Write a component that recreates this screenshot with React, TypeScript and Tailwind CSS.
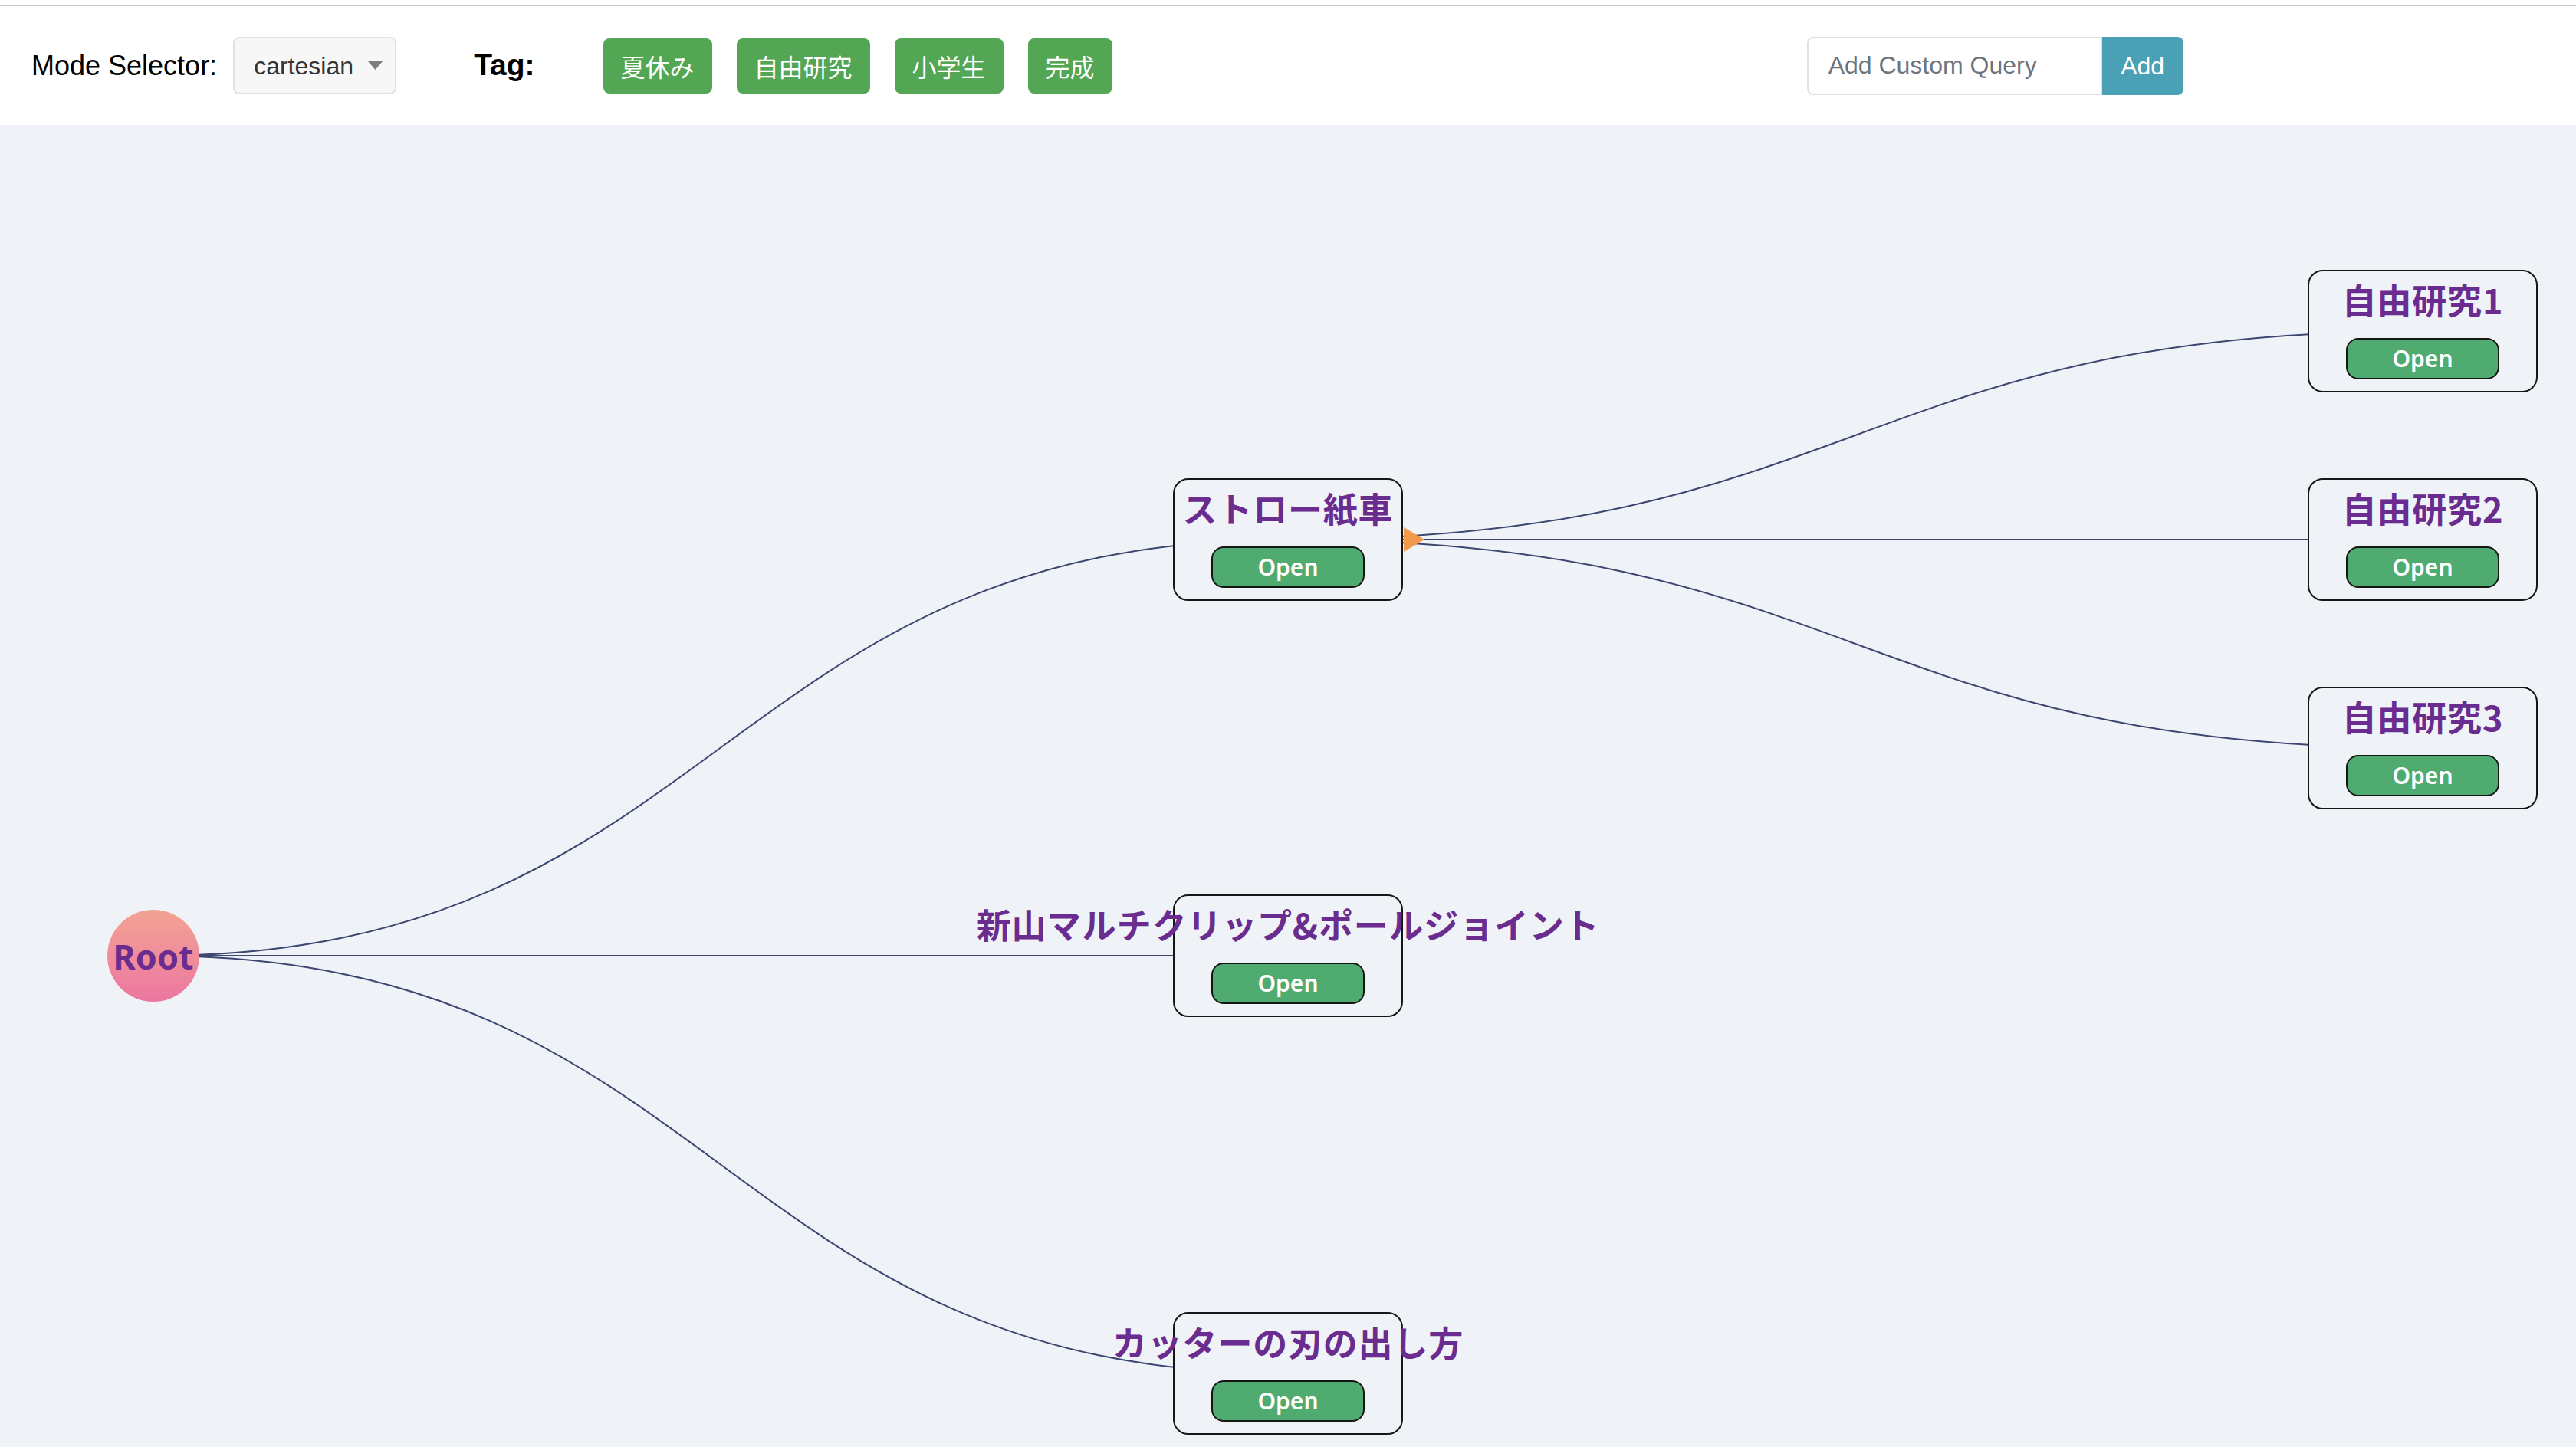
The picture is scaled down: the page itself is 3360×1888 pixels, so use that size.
import React from "react";

type TreeNode = {
    id: string;
    title: string;
    x: number;
    y: number;
    toggle?: boolean;
};

const ROOT = { x: 200, y: 1084 };

const nodes: TreeNode[] = [
    { id: "straw", title: "ストロー紙車", x: 1680, y: 541, toggle: true },
    { id: "clip", title: "新山マルチクリップ&ポールジョイント", x: 1680, y: 1084 },
    { id: "cutter", title: "カッターの刃の出し方", x: 1680, y: 1629 },
    { id: "r1", title: "自由研究1", x: 3160, y: 269 },
    { id: "r2", title: "自由研究2", x: 3160, y: 541 },
    { id: "r3", title: "自由研究3", x: 3160, y: 813 },
];

const links: [number, number, number, number][] = [
    [ROOT.x, ROOT.y, 1680, 541],
    [ROOT.x, ROOT.y, 1680, 1084],
    [ROOT.x, ROOT.y, 1680, 1629],
    [1680, 541, 3160, 269],
    [1680, 541, 3160, 541],
    [1680, 541, 3160, 813],
];

const tags = ["夏休み", "自由研究", "小学生", "完成"];

function linkPath([x0, y0, x1, y1]: [number, number, number, number]) {
    const xm = (x0 + x1) / 2;
    return `M${x0},${y0} C${xm},${y0} ${xm},${y1} ${x1},${y1}`;
}

function NodeCard({ node }: { node: TreeNode }) {
    return (
        <div
            className="absolute w-[300px] h-[160px] -translate-x-1/2 -translate-y-1/2 rounded-[20px] border-2 border-[#161616] bg-[#eff2f7] flex flex-col items-center pt-[14px]"
            style={{ left: node.x, top: node.y }}
        >
            <p className="whitespace-nowrap h-[46px] leading-[46px] text-[45px] tracking-[0.8px] font-bold text-[#6a2c8e] [font-family:'Noto_Sans_CJK_JP',sans-serif]">
                {node.title}
            </p>

            <button className="mt-[27px] w-[200px] h-[54px] rounded-[16px] border-2 border-[#161616] bg-[#4fab6f] text-white text-[30px] font-semibold [font-family:'Noto_Sans',sans-serif] leading-none">
                Open
            </button>

            {node.toggle && (
                <svg
                    className="absolute left-[299px] top-[62px]"
                    width="28"
                    height="32"
                    viewBox="0 0 28 32"
                >
                    <polygon points="0,0 27,16 0,32" fill="#f09a4b" />
                </svg>
            )}
        </div>
    );
}

export default function App() {
    return (
        <div className="w-[3360px] h-[1888px] flex flex-col bg-white overflow-hidden [font-family:'Liberation_Sans',Arial,sans-serif]">
            <div className="h-[6px] bg-white" />

            <header className="h-[157px] border-t-2 border-[#c4c4c4] bg-white flex items-center pl-[41px]">
                <span className="text-[36px] text-black">Mode Selector:</span>

                <div className="ml-[21px] w-[213px] h-[75px] rounded-[8px] border-2 border-[#dfe3e8] bg-[#f7f7f7] flex items-center pl-[25px] pr-[16px] justify-between">
                    <span className="text-[32px] text-[#333]">cartesian</span>
                    <svg width="19" height="11" viewBox="0 0 19 11">
                        <polygon points="0,0 19,0 9.5,11" fill="#7d7d7d" />
                    </svg>
                </div>

                <span className="ml-[101px] text-[39px] font-bold text-black">Tag:</span>

                <div className="ml-[89px] flex gap-[32px]">
                    {tags.map((tag) => (
                        <span
                            key={tag}
                            className="h-[72px] px-[23px] rounded-[8px] bg-[#53a653] text-white text-[32px] flex items-center [font-family:'Noto_Sans_CJK_JP',sans-serif]"
                        >
                            {tag}
                        </span>
                    ))}
                </div>

                <div className="ml-[906px] flex">
                    <input
                        className="w-[385px] h-[76px] rounded-l-[8px] border-2 border-[#dde1e6] bg-white pl-[26px] text-[32px] placeholder:text-[#6c757d] outline-none"
                        placeholder="Add Custom Query"
                    />
                    <button className="w-[106px] h-[76px] rounded-r-[8px] bg-[#4aa0b5] text-white text-[32px]">
                        Add
                    </button>
                </div>
            </header>

            <main className="relative flex-1 bg-[#eff2f7]">
                <svg className="absolute inset-0" width="3360" height="1725">
                    {links.map((l, i) => (
                        <path key={i} d={linkPath(l)} fill="none" stroke="#3c4670" strokeWidth="2" />
                    ))}
                </svg>

                <div
                    className="absolute w-[120px] h-[120px] -translate-x-1/2 -translate-y-1/2 rounded-full bg-gradient-to-b from-[#f2a392] to-[#ec76a1] flex items-center justify-center"
                    style={{ left: ROOT.x, top: ROOT.y }}
                >
                    <span className="text-[45px] font-bold text-[#6a2c8e] [font-family:'Noto_Sans',sans-serif] leading-none">
                        Root
                    </span>
                </div>

                {nodes.map((node) => (
                    <NodeCard key={node.id} node={node} />
                ))}
            </main>
        </div>
    );
}
